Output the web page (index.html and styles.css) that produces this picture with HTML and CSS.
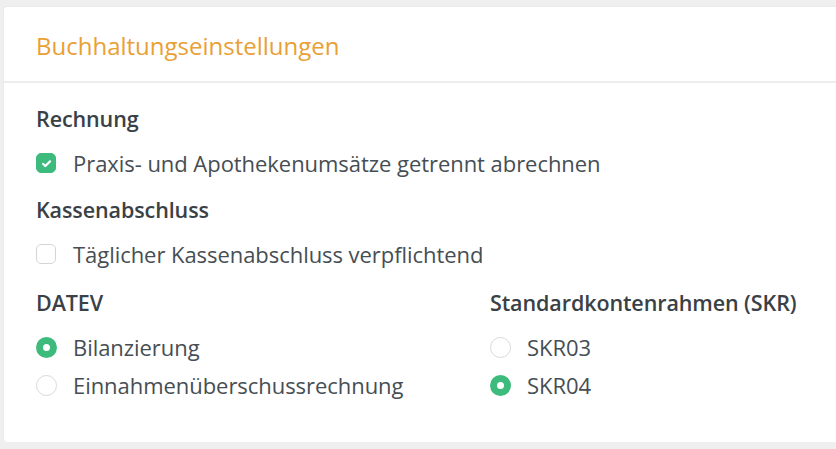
FILE: index.html
```html
<!DOCTYPE html>
<html lang="de">
  <head>
    <meta charset="utf-8">
    <title>Buchhaltungseinstellungen</title>
    <link rel="stylesheet" href="styles.css">
  </head>
  <body>
    <div class="card">
      <div class="card-header">Buchhaltungseinstellungen</div>
      <div class="card-body">
        <div class="group">
          <div class="label">Rechnung</div>
          <label class="option"><span class="check checked"><svg viewBox="0 0 12 12" width="13" height="13"><path d="M2.8 6.3l2.2 2.1 4.3-4.4" fill="none" stroke="#fff" stroke-width="2" stroke-linecap="round" stroke-linejoin="round"/></svg></span>Praxis- und Apothekenumsätze getrennt abrechnen</label>
        </div>
        <div class="group">
          <div class="label">Kassenabschluss</div>
          <label class="option"><span class="check"></span>Täglicher Kassenabschluss verpflichtend</label>
        </div>
        <div class="columns">
          <div class="group">
            <div class="label">DATEV</div>
            <label class="option"><span class="radio checked"></span>Bilanzierung</label>
            <label class="option"><span class="radio"></span>Einnahmenüberschussrechnung</label>
          </div>
          <div class="group">
            <div class="label">Standardkontenrahmen (SKR)</div>
            <label class="option"><span class="radio"></span>SKR03</label>
            <label class="option"><span class="radio checked"></span>SKR04</label>
          </div>
        </div>
      </div>
    </div>
  </body>
</html>
```

FILE: styles.css
```css
html {
  height: 100%;
}
body {
  margin: 0;
  padding: 7px 0 0 4px;
  background: #efefef;
  color: #464e53;
  font-family: "Open Sans", "Noto Sans", sans-serif;
  font-size: 22px;
  letter-spacing: -0.05px;
  overflow: hidden;
}

.card {
  background: #fff;
  border-radius: 3px;
  margin-right: -10px;
  height: 435px;
  box-shadow: 0 0 2px rgba(0,0,0,0.08);
}

.card-header {
  height: 74px;
  line-height: 78px;
  padding-left: 32px;
  color: #e9a034;
  font-size: 24px;
  letter-spacing: 0;
  border-bottom: 2px solid #ececec;
}

.card-body {
  padding: 21px 32px 0 32px;
  display: flex;
  flex-direction: column;
  gap: 17px;
}

.group {
  display: flex;
  flex-direction: column;
  gap: 8px;
}

.label {
  font-weight: 600;
  font-size: 21.5px;
  letter-spacing: -0.1px;
  color: #3a4146;
  line-height: 30px;
  height: 30px;
  margin-bottom: 6px;
}

.option {
  display: flex;
  align-items: center;
  line-height: 30px;
  height: 30px;
}

.columns {
  display: grid;
  grid-template-columns: 454px 1fr;
  margin-top: 2px;
}

.check {
  width: 20px;
  height: 20px;
  box-sizing: border-box;
  border: 1px solid #d5d5d5;
  border-radius: 5px;
  margin-right: 17px;
  display: flex;
  align-items: center;
  justify-content: center;
}

.check.checked {
  background: #3dbb7c;
  border-color: #3dbb7c;
}

.radio {
  width: 21px;
  height: 21px;
  box-sizing: border-box;
  border: 1px solid #d9d9d9;
  border-radius: 50%;
  margin-right: 16px;
}

.radio.checked {
  border: 7px solid #3dbb7c;
}
```
